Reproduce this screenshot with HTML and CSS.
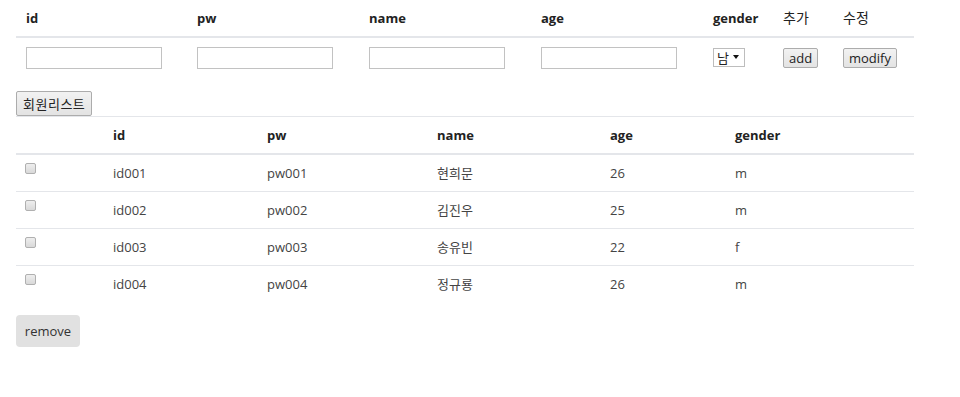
FILE: index.html
```html
<!DOCTYPE html>
<html lang="ko">
<head>
    <meta charset="UTF-8">
    <title>회원관리</title>
    <link rel="stylesheet" href="styles.css">
</head>
<body>
    <div class="container">
        <table class="table form-table">
            <colgroup>
                <col style="width:173px">
                <col style="width:172px">
                <col style="width:172px">
                <col style="width:172px">
                <col style="width:70px">
                <col style="width:60px">
                <col style="width:79px">
            </colgroup>
            <thead>
                <tr>
                    <th>id</th>
                    <th>pw</th>
                    <th>name</th>
                    <th>age</th>
                    <th>gender</th>
                    <th class="ko">추가</th>
                    <th class="ko">수정</th>
                </tr>
            </thead>
            <tbody>
                <tr>
                    <td><input type="text" class="field" id="id"></td>
                    <td><input type="text" class="field" id="pw"></td>
                    <td><input type="text" class="field" id="name"></td>
                    <td><input type="text" class="field" id="age"></td>
                    <td>
                        <span class="select-wrap">
                            <select id="gender" class="gender-select">
                                <option value="m">남</option>
                                <option value="f">여</option>
                            </select>
                        </span>
                    </td>
                    <td><button class="btn-small">add</button></td>
                    <td><button class="btn-small">modify</button></td>
                </tr>
            </tbody>
        </table>

        <button class="btn-small btn-list">회원리스트</button>

        <table class="table list-table">
            <colgroup>
                <col style="width:89px">
                <col style="width:154px">
                <col style="width:170px">
                <col style="width:173px">
                <col style="width:125px">
                <col style="width:187px">
            </colgroup>
            <thead>
                <tr>
                    <th></th>
                    <th>id</th>
                    <th>pw</th>
                    <th>name</th>
                    <th>age</th>
                    <th>gender</th>
                </tr>
            </thead>
            <tbody id="memberList">
                <tr>
                    <td><input type="checkbox" class="check"></td>
                    <td>id001</td>
                    <td>pw001</td>
                    <td>현희문</td>
                    <td>26</td>
                    <td>m</td>
                </tr>
                <tr>
                    <td><input type="checkbox" class="check"></td>
                    <td>id002</td>
                    <td>pw002</td>
                    <td>김진우</td>
                    <td>25</td>
                    <td>m</td>
                </tr>
                <tr>
                    <td><input type="checkbox" class="check"></td>
                    <td>id003</td>
                    <td>pw003</td>
                    <td>송유빈</td>
                    <td>22</td>
                    <td>f</td>
                </tr>
                <tr>
                    <td><input type="checkbox" class="check"></td>
                    <td>id004</td>
                    <td>pw004</td>
                    <td>정규룡</td>
                    <td>26</td>
                    <td>m</td>
                </tr>
            </tbody>
        </table>

        <button class="btn-remove">remove</button>
    </div>
</body>
</html>
```

FILE: styles.css
```css
* {
    margin: 0;
    padding: 0;
    box-sizing: border-box;
}

body {
    font-family: 'Open Sans', 'Noto Sans CJK KR', sans-serif;
    font-size: 13px;
    line-height: 20px;
    color: #444444;
    background: #ffffff;
}

.container {
    width: 898px;
    margin-left: 16px;
}

.table {
    width: 898px;
    table-layout: fixed;
    border-collapse: collapse;
}

.table th {
    text-align: left;
    font-weight: 700;
    color: #222222;
    padding: 8px;
    border-bottom: 2px solid #e4e6ea;
}

.table td {
    padding: 8px;
    vertical-align: top;
    border-top: 1px solid #e4e6ea;
}

.table th.ko {
    font-weight: 400;
    font-size: 14px;
}

/* input row */
.form-table {
    margin-bottom: 15px;
}

.form-table th:first-child,
.form-table td:first-child {
    padding-left: 10px;
}

.form-table td {
    padding-top: 9px;
    padding-bottom: 7px;
}

.field {
    display: block;
    width: 136px;
    height: 22px;
    border: 1px solid #c2c2c2;
    font: inherit;
    padding: 0 3px;
}

.select-wrap {
    position: relative;
    display: inline-block;
    margin-top: 1px;
}

.gender-select {
    appearance: none;
    -webkit-appearance: none;
    width: 32px;
    height: 19px;
    border: 1px solid #bdbdbd;
    background: #ffffff;
    font-family: 'Noto Sans CJK KR', sans-serif;
    font-size: 13px;
    line-height: 17px;
    color: #222222;
    padding: 0 0 0 3px;
}

.select-wrap::after {
    content: "";
    position: absolute;
    right: 6px;
    top: 7px;
    border-left: 3px solid transparent;
    border-right: 3px solid transparent;
    border-top: 4px solid #111111;
    pointer-events: none;
}

.btn-small {
    display: inline-block;
    height: 20px;
    margin-top: 1px;
    padding: 0 5px;
    font-family: 'Open Sans', 'Noto Sans CJK KR', sans-serif;
    font-size: 13px;
    line-height: 18px;
    color: #222222;
    border: 1px solid #acacac;
    border-radius: 2px;
    background: linear-gradient(#f2f2f2, #e3e3e3);
}

.btn-list {
    display: block;
    height: 25px;
    margin-top: 0;
    padding: 0 6px;
    font-family: 'Noto Sans CJK KR', sans-serif;
    line-height: 22px;
    letter-spacing: 0.5px;
}

/* member list */
.list-table thead th {
    border-top: 1px solid #e4e6ea;
}

.list-table tbody tr:first-child td {
    border-top: 0;
}

.check {
    appearance: none;
    -webkit-appearance: none;
    display: block;
    width: 11px;
    height: 11px;
    margin: 0 0 0 1px;
    border: 1px solid #b0b0b0;
    border-radius: 2px;
    background: linear-gradient(#eeeeee, #d9d9d9);
}

.btn-remove {
    display: block;
    width: 64px;
    height: 32px;
    margin-top: 13px;
    border: 0;
    border-radius: 4px;
    background: #e1e1e1;
    font-family: 'Open Sans', sans-serif;
    font-size: 13px;
    color: #333333;
}
```
